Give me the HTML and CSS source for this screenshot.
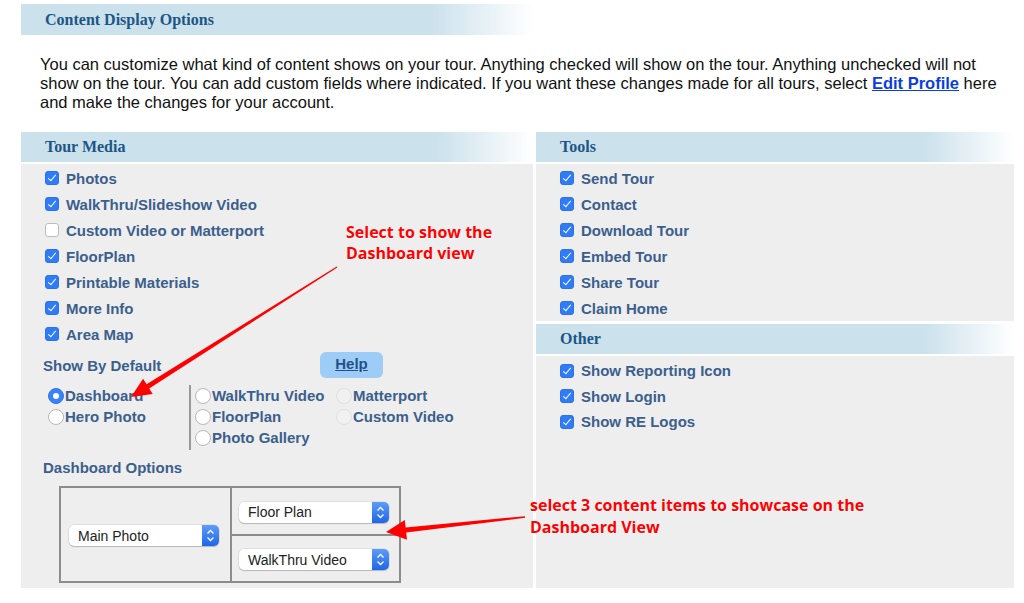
FILE: index.html
```html
<!DOCTYPE html>
<html lang="en">
<head>
    <meta charset="UTF-8">
    <title>Content Display Options</title>
    <link rel="stylesheet" href="styles.css">
</head>
<body>
<div class="page">

    <div class="title-bar">Content Display Options</div>

    <p class="intro">You can customize what kind of content shows on your tour. Anything checked will show on the tour. Anything unchecked will not show on the tour. You can add custom fields where indicated. If you want these changes made for all tours, select <a href="#">Edit Profile</a> here and make the changes for your account.</p>

    <div class="columns">
        <div class="column">
            <div class="section-head">Tour Media</div>
            <div class="section-body media">
                <label class="check"><input type="checkbox" checked>Photos</label>
                <label class="check"><input type="checkbox" checked>WalkThru/Slideshow Video</label>
                <label class="check"><input type="checkbox">Custom Video or Matterport</label>
                <label class="check"><input type="checkbox" checked>FloorPlan</label>
                <label class="check"><input type="checkbox" checked>Printable Materials</label>
                <label class="check"><input type="checkbox" checked>More Info</label>
                <label class="check"><input type="checkbox" checked>Area Map</label>

                <div class="default-row">
                    <span class="sub-title default-label">Show By Default</span>
                    <a class="help-btn" href="#">Help</a>
                </div>

                <div class="radios">
                    <div class="radio-group">
                        <label class="radio"><input type="radio" name="default" checked>Dashboard</label>
                        <label class="radio"><input type="radio" name="default">Hero Photo</label>
                    </div>
                    <div class="radio-group more">
                        <label class="radio"><input type="radio" name="default">WalkThru Video</label>
                        <label class="radio"><input type="radio" name="default" disabled>Matterport</label>
                        <label class="radio"><input type="radio" name="default">FloorPlan</label>
                        <label class="radio"><input type="radio" name="default" disabled>Custom Video</label>
                        <label class="radio"><input type="radio" name="default">Photo Gallery</label>
                    </div>
                </div>

                <div class="sub-title dash-title">Dashboard Options</div>

                <div class="dash-table">
                    <div class="dash-main">
                        <span class="select main-select">
                            <select><option>Main Photo</option></select>
                            <span class="select-arrow"><svg width="17" height="21" viewBox="0 0 17 21"><path d="M5.5 8.5 8.5 5.5 11.5 8.5M5.5 12.5 8.5 15.5 11.5 12.5" fill="none" stroke="#fff" stroke-width="1.3"/></svg></span>
                        </span>
                    </div>
                    <div class="dash-cell">
                        <span class="select">
                            <select><option>Floor Plan</option></select>
                            <span class="select-arrow"><svg width="17" height="21" viewBox="0 0 17 21"><path d="M5.5 8.5 8.5 5.5 11.5 8.5M5.5 12.5 8.5 15.5 11.5 12.5" fill="none" stroke="#fff" stroke-width="1.3"/></svg></span>
                        </span>
                    </div>
                    <div class="dash-cell bottom">
                        <span class="select">
                            <select><option>WalkThru Video</option></select>
                            <span class="select-arrow"><svg width="17" height="21" viewBox="0 0 17 21"><path d="M5.5 8.5 8.5 5.5 11.5 8.5M5.5 12.5 8.5 15.5 11.5 12.5" fill="none" stroke="#fff" stroke-width="1.3"/></svg></span>
                        </span>
                    </div>
                </div>
            </div>
        </div>

        <div class="column">
            <div class="section-head">Tools</div>
            <div class="section-body tools">
                <label class="check"><input type="checkbox" checked>Send Tour</label>
                <label class="check"><input type="checkbox" checked>Contact</label>
                <label class="check"><input type="checkbox" checked>Download Tour</label>
                <label class="check"><input type="checkbox" checked>Embed Tour</label>
                <label class="check"><input type="checkbox" checked>Share Tour</label>
                <label class="check"><input type="checkbox" checked>Claim Home</label>
            </div>
            <div class="section-head other-head">Other</div>
            <div class="section-body other">
                <label class="check"><input type="checkbox" checked>Show Reporting Icon</label>
                <label class="check"><input type="checkbox" checked>Show Login</label>
                <label class="check"><input type="checkbox" checked>Show RE Logos</label>
            </div>
        </div>
    </div>

    <!-- callouts -->
    <div class="note note-default">Select to show the<br>Dashboard view</div>
    <div class="note note-dash">select 3 content items to showcase on the<br>Dashboard View</div>
    <svg class="arrows" width="1024" height="603" viewBox="0 0 1024 603">
        <polygon points="337.3,267.4 149.2,388.4 152.7,393.9 131,397 143.1,378.7 146.6,384.2 336.7,266.6" fill="#f00"/>
        <polygon points="525.1,517.8 406.2,532.4 407,539.8 386,532 404.8,520 405.6,527.4 524.9,516.2" fill="#f00"/>
    </svg>

</div>
</body>
</html>
```

FILE: styles.css
```css
body {
    margin: 0;
    background-color: white;
    font-family: "Liberation Sans", Arial, sans-serif;
}

.page {
    position: relative;
    width: 1024px;
    height: 603px;
    padding: 4px 0 0 21px;
    box-sizing: border-box;
    overflow: hidden;
}

.title-bar {
    width: 512px;
    height: 31px;
    padding-left: 24px;
    box-sizing: border-box;
    line-height: 31px;
    font-family: "Liberation Serif", "Times New Roman", serif;
    font-weight: bold;
    font-size: 16px;
    color: #1d5686;
    background: linear-gradient(to right, #cbe1ec 0, #cbe1ec 80%, rgba(203, 225, 236, 0) 100%);
}

.intro {
    margin: 20px 0 20px 19px;
    width: 960px;
    font-size: 16.5px;
    line-height: 19px;
    color: #111;
}

.intro a {
    color: #0a3ee0;
    font-weight: bold;
}

.columns {
    display: flex;
    gap: 3px;
}

.column {
    display: flex;
    flex-direction: column;
    gap: 2px;
}

.column:first-child {
    width: 512px;
}

.column:last-child {
    width: 478px;
}

.section-head {
    height: 30px;
    padding-left: 24px;
    line-height: 30px;
    font-family: "Liberation Serif", "Times New Roman", serif;
    font-weight: bold;
    font-size: 16px;
    color: #1d5686;
    background: linear-gradient(to right, #cbe1ec 0, #cbe1ec 81%, rgba(203, 225, 236, 0) 100%);
}

.other-head {
    margin-top: 1px;
}

.section-body {
    background-color: #eeeeee;
    padding: 1px 0 0 24px;
}

.section-body.media {
    padding-bottom: 5px;
}

.section-body.other {
    flex: 1;
    padding-top: 2px;
}

.check {
    display: flex;
    align-items: center;
    gap: 7px;
    height: 26px;
    font-weight: bold;
    font-size: 15px;
    color: #3b5f8d;
}

.other .check {
    height: 25.5px;
}

.check input {
    appearance: none;
    position: relative;
    width: 14px;
    height: 14px;
    margin: 0;
    border: 1px solid #bdbdbd;
    border-radius: 3px;
    background-color: white;
    box-sizing: border-box;
}

.check input:checked {
    border-color: #2a72ef;
    background-color: #2f7cf6;
}

.check input:checked::after {
    content: "";
    position: absolute;
    left: 4px;
    top: 1px;
    width: 3px;
    height: 7px;
    border: solid white;
    border-width: 0 1.6px 1.6px 0;
    transform: rotate(40deg);
}

.sub-title {
    font-weight: bold;
    font-size: 15px;
    color: #3b5f8d;
}

.default-row {
    display: flex;
    align-items: center;
    height: 26px;
    margin: 5px 0 0 -2px;
}

.default-label {
    width: 277px;
}

.help-btn {
    width: 63px;
    height: 26px;
    line-height: 24px;
    text-align: center;
    border-radius: 6px;
    background-color: #9dcdf6;
    color: #23508a;
    font-weight: bold;
    font-size: 15px;
}

.radios {
    display: flex;
    height: 66px;
    margin: 6px 0 0 3px;
    padding-top: 1px;
    box-sizing: border-box;
}

.radio-group {
    width: 141px;
}

.radio-group.more {
    display: grid;
    grid-template-columns: 141px auto;
    align-content: start;
    width: auto;
    padding-left: 4px;
    border-left: 2px solid #999;
}

.radio {
    display: flex;
    align-items: center;
    gap: 1px;
    height: 21px;
    font-weight: bold;
    font-size: 15px;
    color: #3b5f8d;
}

.radio input {
    appearance: none;
    position: relative;
    width: 16px;
    height: 16px;
    margin: 0;
    border: 1px solid #b8b8b8;
    border-radius: 50%;
    background-color: white;
    box-sizing: border-box;
}

.radio input:checked {
    border-color: #2f74ea;
    background-color: #3a82f7;
}

.radio input:checked::after {
    content: "";
    position: absolute;
    left: 4px;
    top: 4px;
    width: 6px;
    height: 6px;
    border-radius: 50%;
    background-color: white;
}

.radio input:disabled {
    border-color: #e0e0e0;
    background-color: #f1f1f1;
}

.dash-title {
    margin: 8px 0 0 -2px;
    line-height: 20px;
}

.dash-table {
    display: grid;
    grid-template-columns: 171px 167px;
    grid-template-rows: 46px 47px;
    width: 342px;
    height: 97px;
    margin: 8px 0 0 14px;
    border: 2px solid #8c8c8c;
    box-sizing: border-box;
}

.dash-main {
    grid-row: 1 / 3;
    display: flex;
    align-items: center;
    padding: 2px 0 0 8px;
    border-right: 2px solid #8c8c8c;
}

.dash-cell {
    display: flex;
    align-items: center;
    padding: 2px 0 0 7px;
}

.dash-cell.bottom {
    padding-top: 2px;
    border-top: 2px solid #8c8c8c;
}

.select {
    position: relative;
    display: inline-block;
    width: 150px;
    height: 21px;
}

.select select {
    appearance: none;
    width: 100%;
    height: 21px;
    padding: 0 0 0 9px;
    border: none;
    border-radius: 5px;
    background-color: white;
    box-shadow: 0 0 0 0.5px rgba(0, 0, 0, 0.12), 0 1px 1px rgba(0, 0, 0, 0.18);
    font-family: "Liberation Sans", Arial, sans-serif;
    font-size: 14px;
    color: #222;
}

.select-arrow {
    position: absolute;
    top: 0;
    right: 0;
    width: 17px;
    height: 21px;
    border-radius: 0 5px 5px 0;
    background: linear-gradient(#5d9cf8, #1f66e6);
}

.select-arrow svg {
    display: block;
}

.note {
    position: absolute;
    font-family: "Open Sans", "DejaVu Sans", sans-serif;
    font-weight: bold;
    font-size: 16px;
    line-height: 21px;
    color: #ff0000;
    text-shadow: 0 1px 1px #fff, 0 0 2px #fff;
}

.note-default {
    left: 346px;
    top: 222px;
}

.note-dash {
    left: 530px;
    top: 494px;
    line-height: 22px;
}

.arrows {
    position: absolute;
    top: 0;
    left: 0;
    pointer-events: none;
}
```
